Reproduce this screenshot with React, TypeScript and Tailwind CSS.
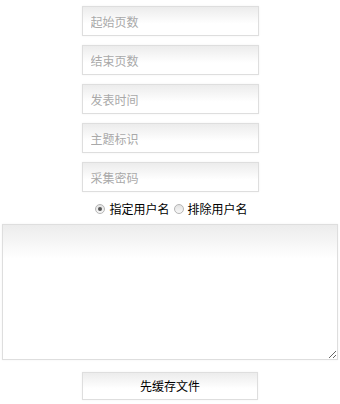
const font = { fontFamily: '"Noto Sans CJK SC", "Liberation Sans", sans-serif' };

const fields = ["起始页数", "结束页数", "发表时间", "主题标识", "采集密码"];

function Radio({ checked }: { checked?: boolean }) {
  return (
    <span className="flex h-[10px] w-[10px] items-center justify-center rounded-full border border-[#b5b5b5] bg-gradient-to-b from-[#e2e2e2] to-[#f8f8f8]">
      {checked && <span className="h-[4px] w-[4px] rounded-full bg-[#555]" />}
    </span>
  );
}

export default function App() {
  return (
    <div className="flex h-[404px] w-[340px] flex-col items-center bg-white pt-[6px] text-[12px] text-black" style={font}>
      <div className="flex flex-col gap-[9px]">
        {fields.map((f) => (
          <input
            key={f}
            placeholder={f}
            className="h-[30px] w-[177px] border border-[#dedede] bg-gradient-to-b from-[#ececec] via-white via-60% to-white px-[8px] text-[12px] shadow-[0_0_2px_rgba(0,0,0,0.06)] outline-none placeholder:text-[#a9a9a9]"
          />
        ))}
      </div>
      <div className="mt-[8px] flex h-[18px] items-center pl-[3px]">
        <Radio checked />
        <span className="ml-[4px] mr-[4px]">指定用户名</span>
        <Radio />
        <span className="ml-[4px]">排除用户名</span>
      </div>
      <textarea className="mt-[6px] h-[136px] w-[336px] resize border border-[#dedede] bg-gradient-to-b from-[#ececec] via-white via-25% to-white shadow-[0_0_2px_rgba(0,0,0,0.06)] outline-none" />
      <button className="mt-[12px] h-[28px] w-[176px] border border-[#dedede] bg-gradient-to-b from-[#ececec] via-white via-60% to-white text-[12px] shadow-[0_0_2px_rgba(0,0,0,0.06)]">
        先缓存文件
      </button>
    </div>
  );
}
